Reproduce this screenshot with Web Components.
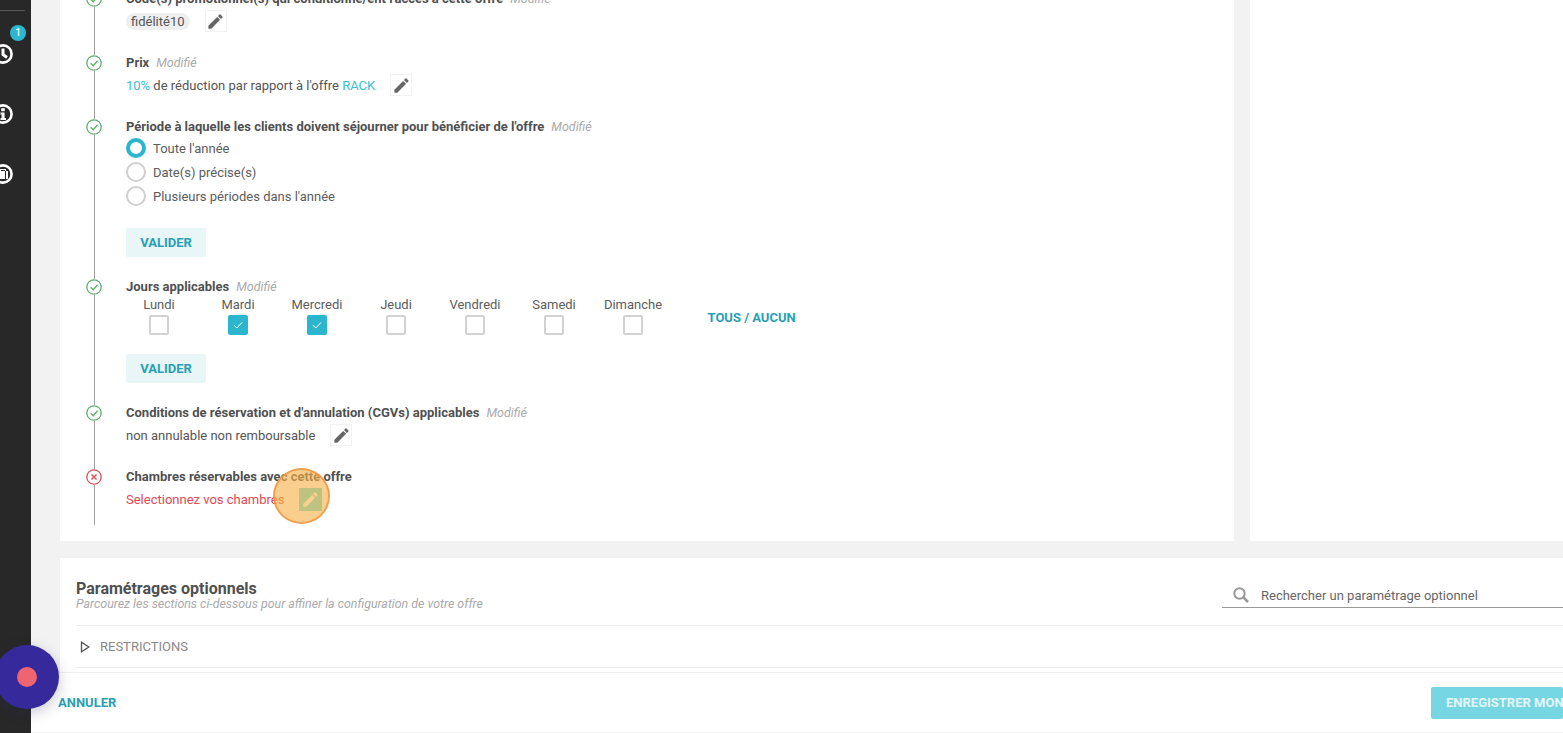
<!DOCTYPE html>
<html lang="fr">
<head>
<meta charset="utf-8">
<title>Offre</title>
<style>
  html, body { margin: 0; height: 100%; overflow: hidden; }
  body { font-family: Roboto, "Liberation Sans", sans-serif; background: #f2f2f2; color: #555; }
  offer-page { height: 733px; }
</style>
</head>
<body>
<template id="pencil-tpl">
  <svg viewBox="0 0 24 24" width="19" height="19"><path fill="currentColor" d="M3 17.25V21h3.75L17.81 9.94l-3.75-3.75L3 17.25zM20.71 7.04a1 1 0 0 0 0-1.41l-2.34-2.34a1 1 0 0 0-1.41 0l-1.83 1.83 3.75 3.75 1.83-1.83z"/></svg>
</template>

<offer-page>
  <side-rail slot="rail"></side-rail>

  <step-list>
    <offer-step status="ok" heading="Code(s) promotionnel(s) qui conditionne/ent l'accès à cette offre" modified>
      <step-row><promo-chip>fidélité10</promo-chip><edit-button></edit-button></step-row>
    </offer-step>
    <offer-step status="ok" heading="Prix" modified>
      <step-row><span><a-hl>10%</a-hl> de réduction par rapport à l'offre <a-hl>RACK</a-hl></span><edit-button></edit-button></step-row>
    </offer-step>
    <offer-step status="ok" heading="Période à laquelle les clients doivent séjourner pour bénéficier de l'offre" modified>
      <radio-row checked>Toute l'année</radio-row>
      <radio-row>Date(s) précise(s)</radio-row>
      <radio-row>Plusieurs périodes dans l'année</radio-row>
      <valid-button>VALIDER</valid-button>
    </offer-step>
    <offer-step status="ok" heading="Jours applicables" modified>
      <day-picker></day-picker>
      <valid-button>VALIDER</valid-button>
    </offer-step>
    <offer-step status="ok" heading="Conditions de réservation et d'annulation (CGVs) applicables" modified>
      <step-row><span>non annulable non remboursable</span><edit-button></edit-button></step-row>
    </offer-step>
    <offer-step status="error" heading="Chambres réservables avec cette offre" last>
      <step-row error><span>Selectionnez vos chambres</span><edit-button active></edit-button></step-row>
    </offer-step>
  </step-list>

  <options-panel slot="options"></options-panel>
  <footer-bar slot="footer"></footer-bar>
</offer-page>
<record-bubble></record-bubble>
<click-spot></click-spot>

<script>
  const pencil = () => document.getElementById('pencil-tpl').innerHTML;

  class OfferPage extends HTMLElement {
    constructor() {
      super();
      this.attachShadow({ mode: 'open' });
    }
    connectedCallback() {
      this.shadowRoot.innerHTML = `
        <style>
          :host { display: flex; width: 100%; overflow: hidden; }
          .main { flex: 1; min-width: 0; display: flex; flex-direction: column; height: 733px; }
          .scroll { flex: 1; min-height: 0; overflow: hidden; padding: 0 0 0 29px; }
          .top { display: flex; gap: 16px; margin-top: -40px; height: 581px; width: 1560px; }
          .card { background: #fff; }
          .left { width: 1174px; flex: none; padding: 30px 0 0 34px; box-sizing: border-box; }
          .right { flex: 1; }
          .opts { margin-top: 17px; width: 1560px; }
        </style>
        <slot name="rail"></slot>
        <div class="main">
          <div class="scroll">
            <div class="top">
              <div class="card left"><slot></slot></div>
              <div class="card right"></div>
            </div>
            <div class="opts"><slot name="options"></slot></div>
          </div>
          <slot name="footer"></slot>
        </div>`;
    }
  }
  customElements.define('offer-page', OfferPage);

  class SideRail extends HTMLElement {
    constructor() {
      super();
      this.attachShadow({ mode: 'open' });
    }
    connectedCallback() {
      this.shadowRoot.innerHTML = `
        <style>
          :host { display: block; position: relative; flex: none; width: 31px; height: 733px; background: #282828; overflow: hidden; }
          .line { height: 1px; width: 25px; background: #555; margin-top: 10px; }
          .icons { display: flex; flex-direction: column; gap: 40px; margin: 33px 0 0 -7px; }
          svg { display: block; width: 20px; height: 20px; color: #fff; }
          .badge { position: absolute; left: 10px; top: 25px; width: 16px; height: 16px; border-radius: 50%; background: #2bb7cf; color: #fff; font: 500 10px/16px Roboto, sans-serif; text-align: center; }
        </style>
        <div class="line"></div>
        <div class="icons">
          <svg viewBox="0 0 20 20"><circle cx="10" cy="10" r="8.6" fill="none" stroke="currentColor" stroke-width="2.6"/><path d="M10 4.5V10.5L14 13.5" fill="none" stroke="currentColor" stroke-width="3"/></svg>
          <svg viewBox="0 0 20 20"><circle cx="10" cy="10" r="8.6" fill="none" stroke="currentColor" stroke-width="2.6"/><rect x="8.2" y="4.2" width="3.6" height="3" fill="currentColor"/><path d="M7.5 8.6H11.6V14H13V16H7.5V14H8.6V10.4H7.5Z" fill="currentColor"/></svg>
          <svg viewBox="0 0 20 20"><circle cx="10" cy="10" r="8.6" fill="none" stroke="currentColor" stroke-width="2.6"/><path d="M5 7H7V5H13V7H15V15H5Z" fill="currentColor"/><rect x="8" y="6" width="4" height="1" fill="#282828"/><rect x="12" y="7" width="1" height="8" fill="#282828"/></svg>
        </div>
        <div class="badge">1</div>`;
    }
  }
  customElements.define('side-rail', SideRail);

  class StepList extends HTMLElement {
    constructor() {
      super();
      this.attachShadow({ mode: 'open' });
      this.shadowRoot.innerHTML = `
        <style>
          :host { display: block; border-left: 1px solid #a3a3a3; padding-bottom: 14px; }
        </style>
        <slot></slot>`;
    }
  }
  customElements.define('step-list', StepList);

  class OfferStep extends HTMLElement {
    constructor() {
      super();
      this.attachShadow({ mode: 'open' });
    }
    connectedCallback() {
      const ok = this.getAttribute('status') !== 'error';
      const tag = this.hasAttribute('modified') ? '<em>Modifié</em>' : '';
      const mark = ok
        ? '<path d="M4.6 8.2L7.2 10.8L11.6 5.8" fill="none" stroke="currentColor" stroke-width="1.4"/>'
        : '<path d="M5.5 5.5L10.5 10.5M10.5 5.5L5.5 10.5" fill="none" stroke="currentColor" stroke-width="1.5"/>';
      this.shadowRoot.innerHTML = `
        <style>
          :host { display: flex; gap: 24px; margin-left: -9px; padding-bottom: 21px; }
          :host([last]) { padding-bottom: 0; }
          .dot { flex: none; width: 16px; height: 16px; margin-top: 1px; background: #fff; border-radius: 50%; color: ${ok ? '#5fb06f' : '#d9525e'}; }
          svg { display: block; }
          .body { min-width: 0; flex: 1; font-size: 13px; color: #555; }
          .title { height: 18px; line-height: 18px; font-size: 13px; font-weight: 700; color: #505050; margin-bottom: 1px; white-space: nowrap; }
          em { font-weight: 400; font-size: 12.5px; color: #aaa; margin-left: 7px; }
        </style>
        <div class="dot"><svg viewBox="0 0 16 16" width="16" height="16"><circle cx="8" cy="8" r="7.2" fill="none" stroke="currentColor" stroke-width="1.3"/>${mark}</svg></div>
        <div class="body">
          <div class="title">${this.getAttribute('heading')}${tag}</div>
          <slot></slot>
        </div>`;
    }
  }
  customElements.define('offer-step', OfferStep);

  class StepRow extends HTMLElement {
    constructor() {
      super();
      this.attachShadow({ mode: 'open' });
      this.shadowRoot.innerHTML = `
        <style>
          :host { display: flex; align-items: center; gap: 15px; height: 24px; font-size: 13px; color: #555; white-space: nowrap; }
          :host([error]) { color: #de4a56; }
        </style>
        <slot></slot>`;
    }
  }
  customElements.define('step-row', StepRow);

  class AHl extends HTMLElement {
    constructor() {
      super();
      this.attachShadow({ mode: 'open' });
      this.shadowRoot.innerHTML = `<style>:host { color: #3cbcd0; }</style><slot></slot>`;
    }
  }
  customElements.define('a-hl', AHl);

  class PromoChip extends HTMLElement {
    constructor() {
      super();
      this.attachShadow({ mode: 'open' });
      this.shadowRoot.innerHTML = `
        <style>
          :host { display: inline-block; background: #efefef; border-radius: 9px; padding: 0 5px; height: 17px; line-height: 17px; font-size: 13px; color: #555; }
        </style>
        <slot></slot>`;
    }
  }
  customElements.define('promo-chip', PromoChip);

  class EditButton extends HTMLElement {
    constructor() {
      super();
      this.attachShadow({ mode: 'open' });
      this.shadowRoot.innerHTML = `
        <style>
          :host { display: inline-flex; align-items: center; justify-content: center; width: 22px; height: 22px; border: 1px solid #f2f2f2; box-sizing: border-box; color: #666; background: #fff; }
          :host([active]) { background: #61e3d9; border-color: #61e3d9; color: #fff; width: 23px; height: 23px; }
          svg { display: block; }
        </style>
        ${pencil()}`;
    }
  }
  customElements.define('edit-button', EditButton);

  class RadioRow extends HTMLElement {
    constructor() {
      super();
      this.attachShadow({ mode: 'open' });
      this.shadowRoot.innerHTML = `
        <style>
          :host { display: flex; align-items: center; gap: 7px; height: 24px; font-size: 13px; color: #5c5c5c; }
          :host(:first-of-type) { margin-top: -1px; }
          :host(:last-of-type) { margin-bottom: 20px; }
          i { display: block; width: 20px; height: 20px; box-sizing: border-box; border-radius: 50%; border: 2px solid #cfcfcf; background: #fff; }
          :host([checked]) i { border: 4px solid #2cb6cd; }
        </style>
        <i></i><slot></slot>`;
    }
  }
  customElements.define('radio-row', RadioRow);

  class ValidButton extends HTMLElement {
    constructor() {
      super();
      this.attachShadow({ mode: 'open' });
      this.shadowRoot.innerHTML = `
        <style>
          :host { display: block; width: 80px; height: 29px; margin-top: 19px; background: #e8f6f8; border-radius: 2px; color: #2a9fb3; font-size: 13px; font-weight: 700; line-height: 29px; text-align: center; }
        </style>
        <slot></slot>`;
    }
  }
  customElements.define('valid-button', ValidButton);

  class DayPicker extends HTMLElement {
    constructor() {
      super();
      this.attachShadow({ mode: 'open' });
    }
    connectedCallback() {
      const days = [['Lundi'], ['Mardi', 1], ['Mercredi', 1], ['Jeudi'], ['Vendredi'], ['Samedi'], ['Dimanche']];
      this.shadowRoot.innerHTML = `
        <style>
          :host { display: flex; align-items: flex-end; margin: -1px 0 0 -6.5px; font-size: 13px; color: #5c5c5c; }
          .days { display: grid; grid-template-columns: repeat(7, 79px); }
          .day { display: flex; flex-direction: column; align-items: center; gap: 1px; }
          label { height: 18px; line-height: 18px; }
          .box { width: 20px; height: 20px; box-sizing: border-box; border: 2px solid #d2d2d2; border-radius: 2px; background: #fff; }
          .on { background: #2cb6cd; border-color: #2cb6cd; color: #fff; }
          svg { display: block; margin: 1px; }
          .all { margin: 0 0 7px 35px; color: #2a9fb3; font-size: 13px; font-weight: 700; line-height: 20px; }
        </style>
        <div class="days">
          ${days.map(d => `
            <div class="day">
              <label>${d[0]}</label>
              <div class="box ${d[1] ? 'on' : ''}">${d[1] ? '<svg viewBox="0 0 14 14" width="14" height="14"><path d="M3 7.2L5.8 10L11 4.5" fill="none" stroke="currentColor" stroke-width="1"/></svg>' : ''}</div>
            </div>`).join('')}
        </div>
        <div class="all">TOUS / AUCUN</div>`;
    }
  }
  customElements.define('day-picker', DayPicker);

  class OptionsPanel extends HTMLElement {
    constructor() {
      super();
      this.attachShadow({ mode: 'open' });
      this.shadowRoot.innerHTML = `
        <style>
          :host { display: block; background: #fff; padding: 0 0 0 16px; box-sizing: border-box; height: 114px; overflow: hidden; }
          .head { display: flex; align-items: flex-end; justify-content: space-between; height: 68px; border-bottom: 1px solid #eee; box-sizing: border-box; }
          h2 { margin: 0; padding-top: 22px; font-size: 16px; line-height: 17px; font-weight: 700; color: #505050; }
          p { margin: 0; font-size: 12.4px; line-height: 13px; font-style: italic; color: #aaa; }
          .titles { align-self: flex-start; }
          .search { display: flex; align-items: center; gap: 11px; width: 398px; height: 28px; margin: 0 0 17px 0; border-bottom: 1px solid #999; box-sizing: border-box; padding: 3px 0 0 10px; font-size: 13px; color: #666; }
          .search svg { display: block; flex: none; }
          .row { display: flex; align-items: center; gap: 10px; height: 42px; border-bottom: 1px solid #eee; box-sizing: border-box; padding-left: 4px; font-size: 13px; color: #888; }
          .row svg { display: block; flex: none; }
        </style>
        <div class="head">
          <div class="titles">
            <h2>Paramétrages optionnels</h2>
            <p>Parcourez les sections ci-dessous pour affiner la configuration de votre offre</p>
          </div>
          <div class="search">
            <svg viewBox="0 0 18 18" width="18" height="18"><circle cx="7.5" cy="7.5" r="5.2" fill="none" stroke="#999" stroke-width="2"/><path d="M11.4 11.4L16 16" stroke="#999" stroke-width="2.6"/></svg>
            Rechercher un paramétrage optionnel
          </div>
        </div>
        <div class="row">
          <svg viewBox="0 0 10 12" width="10" height="12"><path d="M1.5 1.2V10.8L8.8 6Z" fill="none" stroke="#555" stroke-width="1.3"/></svg>
          RESTRICTIONS
        </div>`;
    }
  }
  customElements.define('options-panel', OptionsPanel);

  class FooterBar extends HTMLElement {
    constructor() {
      super();
      this.attachShadow({ mode: 'open' });
      this.shadowRoot.innerHTML = `
        <style>
          :host { display: flex; align-items: center; justify-content: space-between; flex: none; height: 61px; box-sizing: border-box; background: #fff; border-top: 1px solid #efefef; border-bottom: 1px solid #f0f0f0; padding: 0 0 0 27px; position: relative; }
          .cancel { color: #2a9fb3; font-size: 13px; font-weight: 700; }
          .save { width: 132px; height: 32px; margin-top: 1px; background: #76d6e2; border-radius: 2px; color: #e4f7fa; font-size: 13px; font-weight: 700; line-height: 32px; padding-left: 15px; box-sizing: border-box; white-space: nowrap; overflow: hidden; }
        </style>
        <span class="cancel">ANNULER</span>
        <span class="save">ENREGISTRER MON OFFRE</span>`;
    }
  }
  customElements.define('footer-bar', FooterBar);

  class RecordBubble extends HTMLElement {
    constructor() {
      super();
      this.attachShadow({ mode: 'open' });
      this.shadowRoot.innerHTML = `
        <style>
          :host { position: absolute; left: -5px; top: 645px; width: 64px; height: 64px; border-radius: 50%; background: #36299c; box-shadow: 0 4px 14px rgba(40,40,90,.25); display: flex; align-items: center; justify-content: center; }
          i { width: 20px; height: 20px; border-radius: 50%; background: #ee6470; }
        </style>
        <i></i>`;
    }
  }
  customElements.define('record-bubble', RecordBubble);

  class ClickSpot extends HTMLElement {
    constructor() {
      super();
      this.attachShadow({ mode: 'open' });
      this.shadowRoot.innerHTML = `
        <style>
          :host { position: absolute; left: 273px; top: 468px; width: 57px; height: 56px; box-sizing: border-box; border-radius: 50%; background: rgba(247,177,72,.62); border: 2px solid rgba(238,150,70,.85); }
        </style>`;
    }
  }
  customElements.define('click-spot', ClickSpot);
</script>
</body>
</html>
